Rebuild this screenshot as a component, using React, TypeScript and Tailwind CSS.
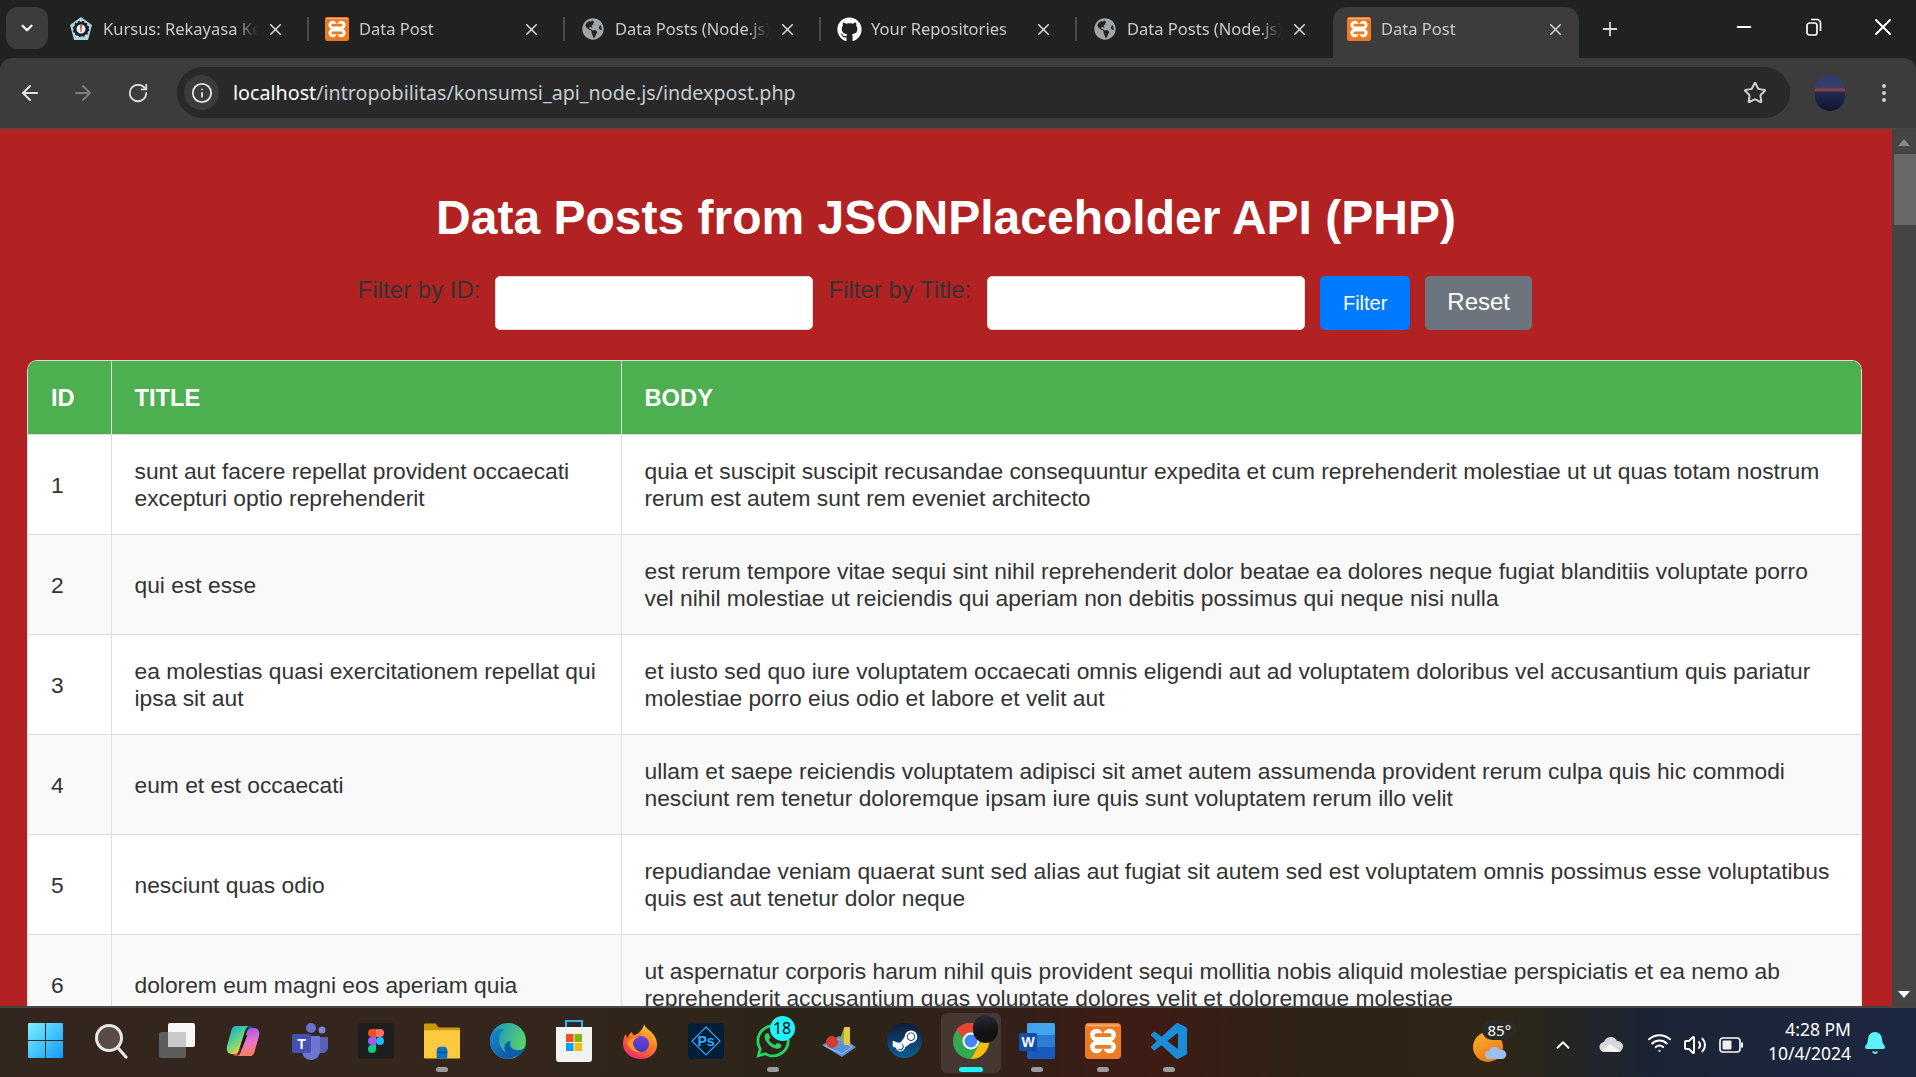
import { ArrowLeft, ArrowRight, Bell, ChevronDown, ChevronUp, EllipsisVertical, Info, Minus, Plus, RotateCw, Star, Volume2, Wifi, X } from "lucide-react";
import { FaGithub, FaGlobeAmericas, FaSteamSymbol, FaWhatsapp } from "react-icons/fa";

const posts = [
  { id: 1, title: "sunt aut facere repellat provident occaecati excepturi optio reprehenderit", body: "quia et suscipit suscipit recusandae consequuntur expedita et cum reprehenderit molestiae ut ut quas totam nostrum rerum est autem sunt rem eveniet architecto" },
  { id: 2, title: "qui est esse", body: "est rerum tempore vitae sequi sint nihil reprehenderit dolor beatae ea dolores neque fugiat blanditiis voluptate porro vel nihil molestiae ut reiciendis qui aperiam non debitis possimus qui neque nisi nulla" },
  { id: 3, title: "ea molestias quasi exercitationem repellat qui ipsa sit aut", body: "et iusto sed quo iure voluptatem occaecati omnis eligendi aut ad voluptatem doloribus vel accusantium quis pariatur molestiae porro eius odio et labore et velit aut" },
  { id: 4, title: "eum et est occaecati", body: "ullam et saepe reiciendis voluptatem adipisci sit amet autem assumenda provident rerum culpa quis hic commodi nesciunt rem tenetur doloremque ipsam iure quis sunt voluptatem rerum illo velit" },
  { id: 5, title: "nesciunt quas odio", body: "repudiandae veniam quaerat sunt sed alias aut fugiat sit autem sed est voluptatem omnis possimus esse voluptatibus quis est aut tenetur dolor neque" },
  { id: 6, title: "dolorem eum magni eos aperiam quia", body: "ut aspernatur corporis harum nihil quis provident sequi mollitia nobis aliquid molestiae perspiciatis et ea nemo ab reprehenderit accusantium quas voluptate dolores velit et doloremque molestiae" },
];

function Xampp({ size }: { size: number }) {
  return (
    <svg width={size} height={size} viewBox="0 0 24 24">
      <rect width="24" height="24" rx="2.5" fill="#ee7a22" />
      <rect x="1" y="1" width="22" height="1.2" fill="#f8b07a" />
      <g fill="#fff">
        <circle cx="7.6" cy="8" r="4.2" />
        <circle cx="16.4" cy="8" r="4.2" />
        <circle cx="7.6" cy="16" r="4.2" />
        <circle cx="16.4" cy="16" r="4.2" />
        <rect x="6" y="7" width="12" height="10" />
      </g>
      <g fill="#ee7a22">
        <rect x="6.4" y="6.8" width="11.2" height="2.6" rx="1.3" />
        <rect x="6.4" y="14.6" width="11.2" height="2.6" rx="1.3" />
      </g>
    </svg>
  );
}

function CourseIcon() {
  return (
    <svg width="24" height="26" viewBox="0 0 24 26">
      <path d="M12 1l11 8-4 15H5L1 9z" fill="#a9d3e6" />
      <path d="M12 4l8 6-3 11H7L4 10z" fill="#e6f0f4" />
      <circle cx="12" cy="13" r="6" fill="none" stroke="#1f1f24" strokeWidth="3" />
      <circle cx="12" cy="13" r="7.500" fill="none" stroke="#1f1f24" strokeWidth="1.500" strokeDasharray="2 2" />
      <path d="M11 9h2l-.6 7h-.8z" fill="#c9433d" />
    </svg>
  );
}

function Tab({ icon, title, active }: { icon: React.ReactNode; title: string; active?: boolean }) {
  return (
    <div className={`flex h-[51px] shrink-0 items-center self-end rounded-t-[14px] pb-[7px] pl-3 ${active ? "-ml-[2px] w-[246px] bg-[#3c3c3c]" : "w-[250px]"}`}>
      <div className="flex w-7 shrink-0 justify-center">{icon}</div>
      <div className="ml-[8px] w-[155px] overflow-hidden whitespace-nowrap text-[16.5px] text-[#c9cbcb] [mask-image:linear-gradient(90deg,#000_85%,transparent)]">{title}</div>
      <X size={19} strokeWidth={2} className={`shrink-0 text-[#d5d5d5] ${active ? "ml-[10px]" : "ml-[8px]"}`} />
    </div>
  );
}

function TabSep({ hidden }: { hidden?: boolean }) {
  return <div className={`mx-[2px] h-[24px] w-[2px] shrink-0 self-center ${hidden ? "" : "bg-[#4b4d4d]"}`} />;
}

function TaskIcon({ children, dot, active }: { children: React.ReactNode; dot?: boolean; active?: boolean }) {
  return (
    <div className="relative flex h-[60px] w-[66.15px] shrink-0 items-center justify-center">
      {active && <div className="absolute inset-y-0 left-[3px] w-[60px] rounded-md bg-white/10" />}
      <div className="relative flex h-9 w-9 -translate-y-[2px] items-center justify-center">{children}</div>
      {dot && <div className="absolute bottom-[1px] left-[27px] h-[5px] w-[12px] rounded-full bg-[#9b9b9b]" />}
      {active && <div className="absolute bottom-[1px] left-[21px] h-[5px] w-[24px] rounded-full bg-[#1ef4ff]" />}
    </div>
  );
}

function Taskbar() {
  return (
    <div className="flex h-[71px] shrink-0 items-center border-t-2 border-[#4a4644] bg-[linear-gradient(90deg,#33261e_0%,#35261d_25%,#2c2418_42%,#32211a_52%,#3e1b14_60%,#2e2316_68%,#2f2616_78%,#1b2435_86%,#1c2741_100%)] pl-[12px]">
      <TaskIcon>
        <svg width="35" height="35" viewBox="0 0 35 35">
          <defs>
            <linearGradient id="win" x1="0" y1="0" x2="1" y2="1"><stop offset="0" stopColor="#7df0ff" /><stop offset="1" stopColor="#0f9bfa" /></linearGradient>
          </defs>
          <path d="M1 0h16v17H0V1a1 1 0 0 1 1-1zM18 0h16a1 1 0 0 1 1 1v16H18zM0 18h17v17H1a1 1 0 0 1-1-1zM18 18h17v16a1 1 0 0 1-1 1H18z" fill="url(#win)" />
        </svg>
      </TaskIcon>
      <TaskIcon>
        <svg width="34" height="36" viewBox="0 0 34 36">
          <circle cx="15" cy="15" r="12.500" fill="#5a4c44" stroke="#e8e8e8" strokeWidth="3" />
          <path d="M24 25l8 9" stroke="#e8e8e8" strokeWidth="3.200" strokeLinecap="round" />
        </svg>
      </TaskIcon>
      <TaskIcon>
        <svg width="36" height="35" viewBox="0 0 36 35">
          <rect x="0" y="9" width="27" height="26" rx="2.500" fill="#5d5d5d" />
          <rect x="9" y="0" width="27" height="24" rx="2" fill="#f7f7f7" />
          <rect x="9" y="9" width="18" height="15" fill="#c9c9c9" />
        </svg>
      </TaskIcon>
      <TaskIcon>
        <svg width="36" height="36" viewBox="0 0 36 36">
          <defs>
            <linearGradient id="cop1" x1="0" y1="0" x2="0.6" y2="1"><stop offset="0" stopColor="#1f9be8" /><stop offset=".5" stopColor="#4fd38e" /><stop offset="1" stopColor="#f6d53c" /></linearGradient>
            <linearGradient id="cop2" x1="0.4" y1="0" x2="0.6" y2="1"><stop offset="0" stopColor="#a35be0" /><stop offset=".55" stopColor="#ee74c8" /><stop offset="1" stopColor="#f5834f" /></linearGradient>
          </defs>
          <path d="M24 3c3 0 5 2 6 5h-5c-3 0-4 2-5 5l-4 12z" fill="#1456c0" />
          <path d="M12 33c-3 0-5-2-6-5h5c3 0 4-2 5-5l4-12z" fill="#e8573a" />
          <path d="M11 3h13c-3 1-4 4-5 8l-5 16c-1 3-3 4-6 4H7c-4 0-6-3-5-8l4-14c1-4 2-6 5-6z" fill="url(#cop1)" />
          <path d="M25 33H12c3-1 4-4 5-8l5-16c1-3 3-4 6-4h1c4 0 6 3 5 8l-4 14c-1 4-2 6-5 6z" fill="url(#cop2)" />
          <path d="M21 12l-5 13" stroke="#1a1a1a" strokeWidth="2.500" />
        </svg>
      </TaskIcon>
      <TaskIcon>
        <svg width="36" height="38" viewBox="0 0 36 38">
          <circle cx="30" cy="8" r="3.500" fill="#7b83d8" />
          <circle cx="19" cy="6" r="5" fill="#6a70cf" />
          <path d="M25 15h10a1 1 0 0 1 1 1v9c0 4-3 6-6 6h-4z" fill="#5a60b8" />
          <path d="M10 14h18v15c0 5-4 9-9 9s-9-4-9-9z" fill="#6e74d4" />
          <rect x="0" y="12" width="19" height="19" rx="2" fill="#4550b0" />
          <text x="9.500" y="26.500" textAnchor="middle" fontSize="14" fontWeight="700" fill="#fff" fontFamily="'Liberation Sans', sans-serif">T</text>
        </svg>
      </TaskIcon>
      <TaskIcon>
        <svg width="36" height="36" viewBox="0 0 36 36">
          <rect width="36" height="36" rx="3" fill="#1e1e1e" />
          <path d="M14 6h4v8h-4a4 4 0 0 1 0-8z" fill="#f24e1e" />
          <path d="M18 6h4a4 4 0 0 1 0 8h-4z" fill="#ff7262" />
          <path d="M14 14h4v8h-4a4 4 0 0 1 0-8z" fill="#a259ff" />
          <circle cx="22" cy="18" r="4" fill="#1abcfe" />
          <path d="M14 22h4v4a4 4 0 1 1-4-4z" fill="#0acf83" />
        </svg>
      </TaskIcon>
      <TaskIcon dot>
        <svg width="37" height="36" viewBox="0 0 37 36">
          <path d="M0 1a1 1 0 0 1 1-1h11l3 4h21a1 1 0 0 1 1 1v4H0z" fill="#c9960c" />
          <path d="M0 7h37v28a1 1 0 0 1-1 1H1a1 1 0 0 1-1-1z" fill="#fcc93f" />
          <path d="M13 36v-8a4 4 0 0 1 4-4h3a4 4 0 0 1 4 4v8z" fill="#0f70c4" />
          <rect x="14" y="29" width="10" height="1.500" fill="#0a4d8c" />
        </svg>
      </TaskIcon>
      <TaskIcon>
        <svg width="36" height="36" viewBox="0 0 36 36">
          <defs>
            <linearGradient id="edge1" x1="0" y1="0" x2="1" y2="0.3"><stop offset="0" stopColor="#0f8fc9" /><stop offset="1" stopColor="#58d06f" /></linearGradient>
            <linearGradient id="edge2" x1="0" y1="0" x2="1" y2="1"><stop offset="0" stopColor="#1a8ad6" /><stop offset="1" stopColor="#0c4e96" /></linearGradient>
          </defs>
          <circle cx="18" cy="18" r="18" fill="url(#edge1)" />
          <path d="M0 18C0 8 8 4 14 7c-5 2-6 9-4 15s9 11 16 11c-3 2-5 3-8 3C8 36 0 28 0 18z" fill="url(#edge2)" />
          <path d="M36 21c0 4-5 7-10 6-6-1-7-6-5-9-5 0-8 5-6 10 2 4 8 7 13 5 5-3 8-8 8-12z" fill="#0b5ea8" />
        </svg>
      </TaskIcon>
      <TaskIcon>
        <svg width="36" height="44" viewBox="0 0 36 44">
          <path d="M10 9V2h16v7" fill="none" stroke="#29b6f6" strokeWidth="2" />
          <path d="M0 8h36v32a3 3 0 0 1-3 3H3a3 3 0 0 1-3-3z" fill="#f3f3f3" />
          <rect x="10" y="15" width="7.500" height="8" fill="#f25022" />
          <rect x="18.500" y="15" width="7.500" height="8" fill="#7fba00" />
          <rect x="10" y="24" width="7.500" height="8" fill="#00a4ef" />
          <rect x="18.500" y="24" width="7.500" height="8" fill="#ffb900" />
        </svg>
      </TaskIcon>
      <TaskIcon>
        <svg width="36" height="36" viewBox="0 0 36 36">
          <defs>
            <linearGradient id="ff1" x1="0.8" y1="0" x2="0.2" y2="1"><stop offset="0" stopColor="#ffd23a" /><stop offset=".45" stopColor="#ff7a1f" /><stop offset="1" stopColor="#f0246e" /></linearGradient>
            <linearGradient id="ff2" x1="0.5" y1="0" x2="0.5" y2="1"><stop offset="0" stopColor="#7a3fe0" /><stop offset="1" stopColor="#3a3ac0" /></linearGradient>
          </defs>
          <path d="M22 1c1 4 5 5 9 10 4 5 4 9 4 11 0 8-7 14-16 14S1 30 1 21c0-4 1-8 3-10 0 2 1 4 2 4 0-3 2-5 4-6 0 2 1 3 3 3 3-1 5-3 7-6 1-2 2-3 2-5z" fill="url(#ff1)" />
          <circle cx="19" cy="21" r="8" fill="url(#ff2)" />
          <path d="M5 20c2-4 7-6 12-6-3 1-6 3-6 6 0 4 3 8 8 9-6 1-12-3-14-9z" fill="#ff9a22" />
        </svg>
      </TaskIcon>
      <TaskIcon>
        <svg width="36" height="36" viewBox="0 0 36 36">
          <rect width="36" height="36" rx="4" fill="#001e36" />
          <path d="M18 4l14 14-14 14L4 18z" fill="none" stroke="#31a8ff" strokeWidth="1.200" />
          <text x="18" y="23" textAnchor="middle" fontSize="14" fontWeight="700" fill="#31a8ff" fontFamily="'Liberation Sans', sans-serif">Ps</text>
        </svg>
      </TaskIcon>
      <TaskIcon dot>
        <FaWhatsapp size={38} className="text-[#25d366]" />
        <div className="absolute -right-[4px] -top-[7px] flex h-[25px] w-[25px] items-center justify-center rounded-full bg-[#1ef4ff] text-[16px] text-black">18</div>
      </TaskIcon>
      <TaskIcon>
        <svg width="34" height="32" viewBox="0 0 34 32">
          <path d="M0 20L17 11l17 11-14 10z" fill="#5c8fd6" />
          <path d="M3 21l14-7 13 8-10 7z" fill="none" stroke="#bcd4f2" strokeWidth=".7" />
          <circle cx="10" cy="17" r="6" fill="#d83a2e" />
          <path d="M17 16l5-13 4 13z" fill="#7fb04c" />
          <rect x="22" y="2" width="6" height="18" rx="1" fill="#e7c93e" />
        </svg>
      </TaskIcon>
      <TaskIcon>
        <div className="flex h-[35px] w-[35px] items-center justify-center rounded-full bg-[linear-gradient(180deg,#0f1a3a,#0e5f96)]">
          <FaSteamSymbol size={28} className="text-white" />
        </div>
      </TaskIcon>
      <TaskIcon active>
        <svg width="36" height="36" viewBox="0 0 36 36">
          <circle cx="18" cy="18" r="18" fill="#34a853" />
          <path d="M18 0a18 18 0 0 1 15.600 9H18a9 9 0 0 0-8.400 5.800L3.400 6.500A18 18 0 0 1 18 0z" fill="#ea4335" />
          <path d="M33.600 9A18 18 0 0 1 18 36l7.800-13.500A9 9 0 0 0 25.800 9z" fill="#fbbc05" />
          <circle cx="18" cy="18" r="8.500" fill="#fff" />
          <circle cx="18" cy="18" r="6.500" fill="#4285f4" />
        </svg>
        <div className="absolute -right-[9px] -top-[8px] h-[28px] w-[25px] rounded-full bg-[linear-gradient(170deg,#2a2d40,#121212_60%)]" />
      </TaskIcon>
      <TaskIcon dot>
        <svg width="36" height="36" viewBox="0 0 36 36">
          <rect x="8" y="0" width="28" height="36" rx="2" fill="#185abd" />
          <rect x="8" y="0" width="28" height="12" rx="2" fill="#41a5ee" />
          <rect x="8" y="12" width="28" height="12" fill="#2b7cd3" />
          <rect x="0" y="10" width="18" height="18" rx="2" fill="#144ea8" />
          <text x="9" y="24" textAnchor="middle" fontSize="14" fontWeight="700" fill="#fff" fontFamily="'Liberation Sans', sans-serif">W</text>
        </svg>
      </TaskIcon>
      <TaskIcon dot>
        <Xampp size={36} />
      </TaskIcon>
      <TaskIcon dot>
        <svg width="36" height="36" viewBox="0 0 24 24">
          <path d="M23.15 2.587L18.21.21a1.494 1.494 0 0 0-1.705.29l-9.46 8.63-4.12-3.128a.999.999 0 0 0-1.276.057L.327 7.261A1 1 0 0 0 .326 8.74L3.899 12 .326 15.26a1 1 0 0 0 .001 1.479L1.65 17.94a.999.999 0 0 0 1.276.057l4.12-3.128 9.46 8.63a1.492 1.492 0 0 0 1.704.29l4.942-2.377A1.5 1.5 0 0 0 24 20.06V3.939a1.5 1.5 0 0 0-.85-1.352zm-5.146 14.861L10.826 12l7.178-5.448v10.896z" fill="#1a8cd8" />
        </svg>
      </TaskIcon>

      <div className="relative ml-[270px] h-[30px] w-[38px] shrink-0 translate-y-[4px]">
        <div className="h-[30px] w-[30px] rounded-full bg-[linear-gradient(150deg,#f6b62c,#ef6c0f)]" />
        <svg width="22" height="12" viewBox="0 0 22 12" className="absolute left-[12px] top-[15px]"><path d="M4 12a4 4 0 0 1 0-8 6 6 0 0 1 11-1 4.500 4.500 0 0 1 3 9z" fill="#9cc0f0" /></svg>
        <div className="absolute -top-[12px] left-[9px] rounded-full bg-[#2a2a26] px-[6px] text-[15px] leading-[20px] text-white">85°</div>
      </div>
      <ChevronUp size={22} className="ml-[41px] translate-y-[2px] text-white" />
      <svg width="24" height="15" viewBox="0 0 24 15" className="ml-[25px] translate-y-[2px]"><path d="M6 15a5 5 0 0 1-1-10 7 7 0 0 1 13-1 5.500 5.500 0 0 1 1 11z" fill="#d8d8d8" /><path d="M2 14l9-7 11 8z" fill="#f5f5f5" /></svg>
      <Wifi size={25} className="ml-[24px] text-white" />
      <Volume2 size={24} className="ml-[11px] translate-y-[2px] text-white" />
      <svg width="24" height="16" viewBox="0 0 24 16" className="ml-[12px] translate-y-[2px]"><rect x="1" y="1" width="20" height="14" rx="3" fill="none" stroke="#fff" strokeWidth="1.600" /><rect x="3.500" y="3.500" width="9" height="9" rx="1" fill="#eee" /><rect x="22" y="5.500" width="2" height="5" fill="#fff" /></svg>
      <div className="ml-auto flex flex-col items-end pb-[3px] text-[17.5px] leading-[24px] text-white">
        <span>4:28 PM</span>
        <span>10/4/2024</span>
      </div>
      <Bell size={24} fill="#5ef0f8" className="ml-[12px] mr-[29px] text-[#5ef0f8]" />
    </div>
  );
}

export default function App() {
  return (
    <div className="flex h-[1077px] w-full flex-col overflow-hidden bg-[#202222] font-['Noto_Sans',sans-serif]">
      <div className="flex h-[58px] shrink-0 items-start">
        <div className="ml-[6px] mt-[7px] flex h-[42px] w-[42px] shrink-0 items-center justify-center rounded-xl bg-[#3c3c3c]">
          <ChevronDown size={18} strokeWidth={3} className="text-white" />
        </div>
        <div className="ml-[7px] flex h-[58px] items-end">
          <Tab icon={<CourseIcon />} title="Kursus: Rekayasa Kebutuhan" />
          <TabSep />
          <Tab icon={<Xampp size={24} />} title="Data Post" />
          <TabSep />
          <Tab icon={<FaGlobeAmericas size={22} className="text-[#a1a4a8]" />} title="Data Posts (Node.js)" />
          <TabSep />
          <Tab icon={<FaGithub size={25} className="text-white" />} title="Your Repositories" />
          <TabSep />
          <Tab icon={<FaGlobeAmericas size={22} className="text-[#a1a4a8]" />} title="Data Posts (Node.js)" />
          <TabSep hidden />
          <Tab icon={<Xampp size={24} />} title="Data Post" active />
        </div>
        <Plus size={22} className="ml-[20px] mt-[18px] text-[#d5d5d5]" />
        <div className="ml-auto flex items-start text-white">
          <Minus size={22} className="mr-[49px] mt-[16px]" />
          <svg width="20" height="20" viewBox="0 0 20 20" fill="none" stroke="#fff" strokeWidth="1.700" className="mr-[45px] mt-[17px]"><rect x="3" y="6" width="10" height="12" rx="2.500" /><path d="M7 2.500h6a3.500 3.500 0 0 1 3.500 3.500v8" /></svg>
          <X size={28} strokeWidth={1.700} className="mr-[19px] mt-[13px]" />
        </div>
      </div>

      <div className="flex h-[71px] shrink-0 items-center rounded-t-xl border-b-[1px] border-[#4a4a4a] bg-[#3c3c3c] pb-[1px]">
        <ArrowLeft size={24} className="ml-[18px] text-[#e3e3e3]" />
        <ArrowRight size={24} className="ml-[29px] text-[#7d7d7d]" />
        <RotateCw size={22} className="ml-[32px] text-[#dcdcdc]" />
        <div className="ml-[28px] flex h-[51px] w-[1613px] shrink-0 items-center rounded-full bg-[#292929] pl-[7px] pr-[23px]">
          <div className="flex h-[35px] w-[35px] items-center justify-center rounded-full bg-[#3c3c3c]">
            <Info size={22} className="text-[#e3e3e3]" />
          </div>
          <div className="ml-[14px] whitespace-nowrap text-[19.7px] text-[#c4cdd3]">
            <span className="text-white">localhost</span>/intropobilitas/konsumsi_api_node.js/indexpost.php
          </div>
          <Star size={24} className="ml-auto text-[#d0d0d0]" />
        </div>
        <div className="ml-[25px] h-[36px] w-[30px] shrink-0 rounded-full bg-[linear-gradient(180deg,#2c3a6e_0%,#3b3f6a_35%,#a0463a_42%,#222a52_48%,#0e1230_100%)]" />
        <EllipsisVertical size={24} className="ml-[27px] text-[#d0d0d0]" />
      </div>

      <div className="flex min-h-0 flex-1">
        <div className="min-w-0 flex-1 overflow-hidden bg-[#b22222] font-['Liberation_Sans',Arial,sans-serif] text-[#333]">
          <h1 className="mb-[29px] mt-[60px] text-center text-[48px] font-bold leading-[58px] text-white">Data Posts from JSONPlaceholder API (PHP)</h1>
          <div className="flex items-start justify-center pr-[2px]">
            <label className="mr-[15px] text-[24px] leading-[27px]">Filter by ID:</label>
            <input className="mr-[15px] h-[54px] w-[318px] rounded-[5px] border border-[#ddd] bg-white" />
            <label className="mr-[16px] text-[24px] leading-[27px]">Filter by Title:</label>
            <input className="mr-[15px] h-[54px] w-[318px] rounded-[5px] border border-[#ddd] bg-white" />
            <button className="mr-[15px] h-[54px] w-[90px] rounded-[5px] bg-[#007bff] text-[20px] text-white">Filter</button>
            <button className="h-[54px] w-[107px] rounded-[5px] bg-[#6c757d] pb-[2px] text-[24px] text-white">Reset</button>
          </div>
          <div className="ml-[27px] mr-[30px] mt-[30px] overflow-hidden rounded-t-[10px] border border-b-0 border-[#ddd]">
            <table className="w-full table-fixed border-collapse text-[22.8px] leading-[27px]">
              <colgroup>
                <col className="w-[83px]" />
                <col className="w-[510px]" />
                <col />
              </colgroup>
              <thead>
                <tr className="h-[73px] bg-[#4caf50] text-left text-[23.7px] text-white">
                  <th className="px-[23px] pt-[2px] font-bold">ID</th>
                  <th className="border-l border-[#ddd] px-[23px] pt-[2px] font-bold">TITLE</th>
                  <th className="border-l border-[#ddd] px-[23px] pt-[2px] font-bold">BODY</th>
                </tr>
              </thead>
              <tbody>
                {posts.map((post, index) => (
                  <tr key={post.id} className={`h-[100px] border-t border-[#ddd] ${index % 2 === 1 ? "bg-[#f9f9f9]" : "bg-white"}`}>
                    <td className="px-[23px] pt-[2px]">{post.id}</td>
                    <td className="border-l border-[#ddd] px-[23px] pt-[2px]">{post.title}</td>
                    <td className="border-l border-[#ddd] px-[23px] pt-[2px]">{post.body}</td>
                  </tr>
                ))}
              </tbody>
            </table>
          </div>
        </div>
        <div className="flex w-[24px] shrink-0 flex-col items-center bg-[#444444]">
          <div className="mt-[10px] h-0 w-0 border-x-[6px] border-b-[7px] border-x-transparent border-b-[#8a8a8a]" />
          <div className="ml-[2px] mt-[8px] h-[71px] w-[22px] bg-[#686868]" />
          <div className="mb-[8px] mt-auto h-0 w-0 border-x-[6px] border-t-[7px] border-x-transparent border-t-white" />
        </div>
      </div>

      <Taskbar />
    </div>
  );
}
